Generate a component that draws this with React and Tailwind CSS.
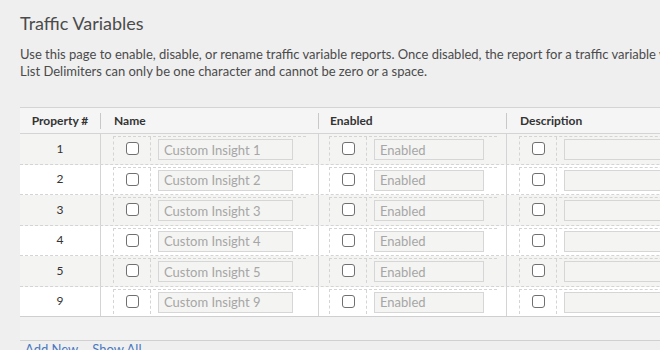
import React from 'react';

const rows = [1, 2, 3, 4, 5, 9];

function Check() {
  return <span className="block w-[13px] h-[13px] rounded-[3px] border border-[#707070] bg-white" />;
}

function Field({ width, text }) {
  return (
    <input
      readOnly
      placeholder={text}
      className={`ml-[7px] mt-[2px] h-[21px] ${width} border border-[#d6d6d6] bg-[#f4f4f2] px-[5px] text-[13px] text-[#a6a6a6] placeholder:text-[#a6a6a6] outline-none`}
    />
  );
}

function Group({ width, text, fieldWidth }) {
  return (
    <div className={`flex h-[25px] ${width} border-l border-t border-dashed border-[#d4d4d4]`}>
      <div className="flex w-[37px] shrink-0 justify-center pt-[5px] border-r border-dashed border-[#d4d4d4]">
        <Check />
      </div>
      <Field width={fieldWidth} text={text} />
    </div>
  );
}

export default function App() {
  return (
    <div className="w-[660px] h-[350px] overflow-hidden bg-[#efefef] font-['Lato','Open_Sans',sans-serif] text-[#4b4b4b]">
      <div className="w-[960px] pl-[20px] pt-[10px]">
        <h1 className="text-[18px] leading-[26px]">Traffic Variables</h1>
        <p className="mt-[10px] text-[13px] leading-[17px]">
          Use this page to enable, disable, or rename traffic variable reports. Once disabled, the report for a traffic variable will no longer be available.
          <br />
          List Delimiters can only be one character and cannot be zero or a space.
        </p>

        <div className="mt-[27px] w-[900px]">
          {/* header */}
          <div className="flex h-[27px] border-t border-b border-[#d4d4d4] bg-[#f5f5f5] text-[12px] font-bold text-[#333]">
            <div className="flex w-[81px] items-center justify-between">
              <span className="flex-1 text-center">Property #</span>
              <span className="h-[16px] w-px bg-[#c8c8c8]" />
            </div>
            <div className="flex w-[218px] items-center justify-between pl-[13px]">
              <span>Name</span>
              <span className="h-[16px] w-px bg-[#c8c8c8]" />
            </div>
            <div className="flex w-[188px] items-center justify-between pl-[11px]">
              <span>Enabled</span>
              <span className="h-[16px] w-px bg-[#c8c8c8]" />
            </div>
            <div className="flex flex-1 items-center pl-[13px]">
              <span>Description</span>
            </div>
          </div>

          {/* rows */}
          {rows.map((n, i) => (
            <div
              key={n}
              className={`flex h-[30.5px] border-b ${i === rows.length - 1 ? 'border-solid border-[#cfcfcf]' : 'border-dashed border-[#d4d4d4]'} ${i % 2 === 0 ? 'bg-[#f4f4f2]' : 'bg-white'}`}
            >
              <div className="flex w-[81px] items-center justify-center border-r border-[#d4d4d4] text-[12px] text-[#333]">
                {n}
              </div>
              <div className="w-[218px] border-r border-[#d4d4d4] pl-[12px] pt-[2px]">
                <Group width="w-[193px]" fieldWidth="w-[135px]" text={`Custom Insight ${n}`} />
              </div>
              <div className="w-[188px] border-r border-[#d4d4d4] pl-[10px] pt-[2px]">
                <Group width="w-[168px]" fieldWidth="w-[110px]" text="Enabled" />
              </div>
              <div className="flex-1 pl-[12px] pt-[2px]">
                <Group width="w-[360px]" fieldWidth="w-[300px]" text="" />
              </div>
            </div>
          ))}

          {/* footer */}
          <div className="h-[24px] border-b border-[#d0d0d0] bg-[#f2f2f2]" />
          <div className="flex gap-[14px] pl-[5px] text-[13px] leading-[16px] text-[#4a78c2]">
            <span>Add New</span>
            <span>Show All</span>
          </div>
        </div>
      </div>
    </div>
  );
}
